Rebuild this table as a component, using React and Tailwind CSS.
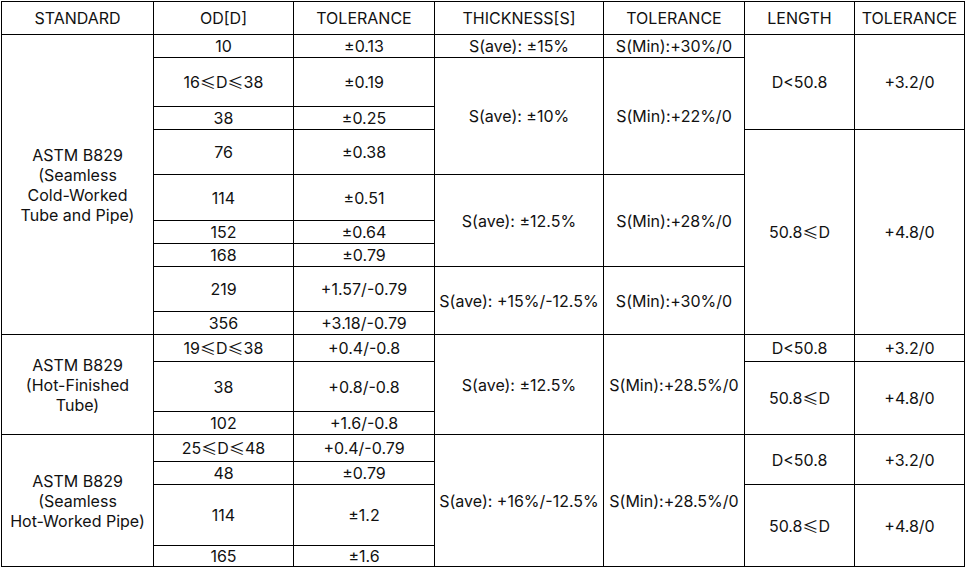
import React from "react";

const header = ["STANDARD", "OD[D]", "TOLERANCE", "THICKNESS[S]", "TOLERANCE", "LENGTH", "TOLERANCE"];

// [text, rowSpan] in table order, like a <table> with rowspans
const cells = [
  // section 1
  [["ASTM B829", "(Seamless", "Cold-Worked", "Tube and Pipe)"], 9],
  ["10", 1], ["±0.13", 1], ["S(ave): ±15%", 1], ["S(Min):+30%/0", 1], ["D<50.8", 3], ["+3.2/0", 3],
  ["16≤D≤38", 1], ["±0.19", 1], ["S(ave): ±10%", 3], ["S(Min):+22%/0", 3],
  ["38", 1], ["±0.25", 1],
  ["76", 1], ["±0.38", 1], ["50.8≤D", 6], ["+4.8/0", 6],
  ["114", 1], ["±0.51", 1], ["S(ave): ±12.5%", 3], ["S(Min):+28%/0", 3],
  ["152", 1], ["±0.64", 1],
  ["168", 1], ["±0.79", 1],
  ["219", 1], ["+1.57/-0.79", 1], ["S(ave): +15%/-12.5%", 2], ["S(Min):+30%/0", 2],
  ["356", 1], ["+3.18/-0.79", 1],
  // section 2
  [["ASTM B829", "(Hot-Finished", "Tube)"], 3],
  ["19≤D≤38", 1], ["+0.4/-0.8", 1], ["S(ave): ±12.5%", 3], ["S(Min):+28.5%/0", 3], ["D<50.8", 1], ["+3.2/0", 1],
  ["38", 1], ["+0.8/-0.8", 1], ["50.8≤D", 2], ["+4.8/0", 2],
  ["102", 1], ["+1.6/-0.8", 1],
  // section 3
  [["ASTM B829", "(Seamless", "Hot-Worked Pipe)"], 4],
  ["25≤D≤48", 1], ["+0.4/-0.79", 1], ["S(ave): +16%/-12.5%", 4], ["S(Min):+28.5%/0", 4], ["D<50.8", 2], ["+3.2/0", 2],
  ["48", 1], ["±0.79", 1],
  ["114", 1], ["±1.2", 1], ["50.8≤D", 2], ["+4.8/0", 2],
  ["165", 1], ["±1.6", 1],
];

const spanClass = {
  1: "row-span-1",
  2: "row-span-2",
  3: "row-span-3",
  4: "row-span-4",
  6: "row-span-6",
  9: "row-span-9",
};

// the ≤ sign is drawn in the CJK face, which gives the slanted form
const withLe = (text) =>
  text.split("≤").map((part, i) => (
    <React.Fragment key={i}>
      {i > 0 && <span className="font-['Noto_Sans_CJK_SC',sans-serif]">≤</span>}
      {part}
    </React.Fragment>
  ));

const Cell = ({ children, span = 1 }) => (
  <div
    className={`${spanClass[span]} flex items-center justify-center border-r border-b border-black text-center leading-5`}
  >
    {children}
  </div>
);

export default function App() {
  return (
    <div className="bg-white w-[967px] h-[571px] pl-px pt-px">
      <div className="grid w-[964px] grid-cols-[152px_140px_141px_169px_141px_110px_110px] grid-rows-[33px_23px_49px_23px_45px_46px_23px_23px_45px_23px_27px_50px_23px_27px_23px_61px_21px] border-l border-t border-black font-['Inter','Noto_Sans',sans-serif] text-[16px] text-[#111]">
        {header.map((h, i) => (
          <Cell key={"h" + i}>{h}</Cell>
        ))}
        {cells.map(([text, span], i) => (
          <Cell key={i} span={span}>
            {Array.isArray(text) ? (
              <div>
                {text.map((t) => (
                  <div key={t}>{t}</div>
                ))}
              </div>
            ) : (
              withLe(text)
            )}
          </Cell>
        ))}
      </div>
    </div>
  );
}
